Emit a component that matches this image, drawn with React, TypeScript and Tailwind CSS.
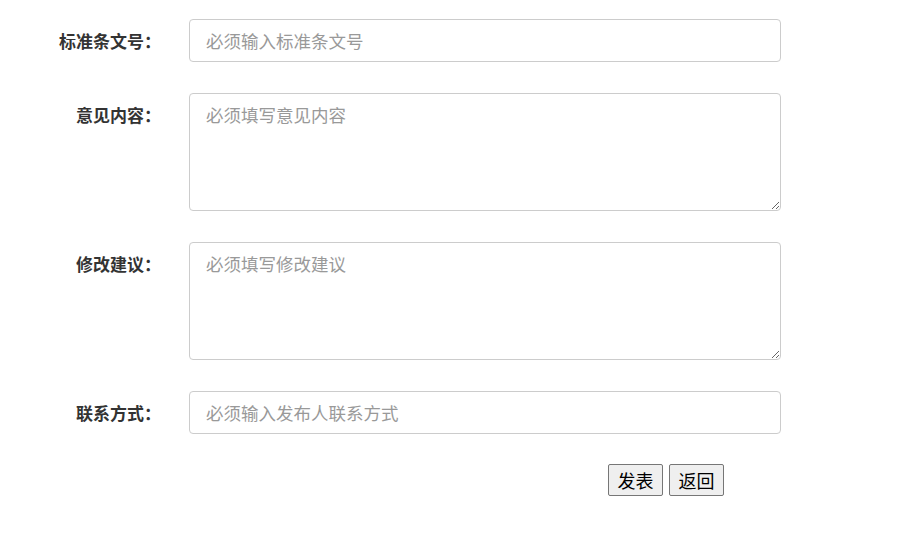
const fields = [
  { label: "标准条文号：", placeholder: "必须输入标准条文号", multi: false },
  { label: "意见内容：", placeholder: "必须填写意见内容", multi: true },
  { label: "修改建议：", placeholder: "必须填写修改建议", multi: true },
  { label: "联系方式：", placeholder: "必须输入发布人联系方式", multi: false },
];

export default function App() {
  return (
    <div className="w-[923px] h-[533px] bg-white pt-[19px] font-['Microsoft_YaHei','Noto_Sans_CJK_SC',sans-serif] text-[#333]">
      <form className="flex flex-col gap-[31px]">
        {fields.map((f) => (
          <div key={f.label} className="flex items-start">
            <label
              className={`w-[161px] text-right text-[17px] font-bold shrink-0 ${
                f.multi ? "pt-[10px] leading-[24px]" : "leading-[43px]"
              }`}
            >
              {f.label}
            </label>
            {f.multi ? (
              <textarea
                placeholder={f.placeholder}
                className="ml-[28px] w-[592px] h-[118px] rounded-[4px] border border-[#ccc] px-[16px] py-[9px] text-[17.5px] leading-[24px] placeholder:text-[#999] outline-none"
              />
            ) : (
              <input
                placeholder={f.placeholder}
                className="ml-[28px] w-[592px] h-[43px] rounded-[4px] border border-[#ccc] px-[16px] text-[17.5px] placeholder:text-[#999] outline-none"
              />
            )}
          </div>
        ))}
        <div className="flex gap-[6px] pl-[608px] -mt-px">
          <button
            type="button"
            className="h-[32px] px-[8.5px] text-[18px] bg-[#efefef] border border-[#767676] rounded-[2px] text-black"
          >
            发表
          </button>
          <button
            type="button"
            className="h-[32px] px-[8.5px] text-[18px] bg-[#efefef] border border-[#767676] rounded-[2px] text-black"
          >
            返回
          </button>
        </div>
      </form>
    </div>
  );
}
